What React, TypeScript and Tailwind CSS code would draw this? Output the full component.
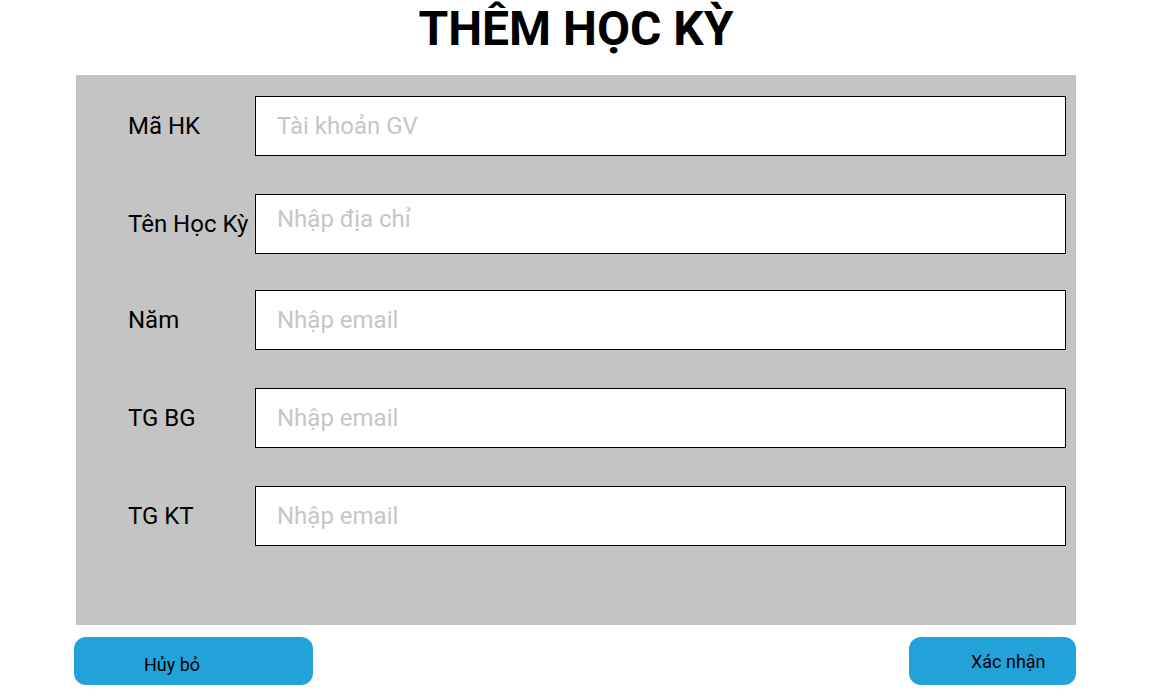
import React from 'react';

const fields = [
  { label: 'Mã HK', placeholder: 'Tài khoản GV', extra: '' },
  { label: 'Tên Học Kỳ', placeholder: 'Nhập địa chỉ', extra: 'pb-[11px]' },
  { label: 'Năm', placeholder: 'Nhập email', extra: '' },
  { label: 'TG BG', placeholder: 'Nhập email', extra: '' },
  { label: 'TG KT', placeholder: 'Nhập email', extra: '' },
];

export default function App() {
  return (
    <div className="w-[1152px] h-[700px] bg-white font-['Roboto',sans-serif] text-black">
      {/* Title */}
      <h1 className="text-center text-[48px] font-bold leading-[normal]">THÊM HỌC KỲ</h1>

      {/* Form panel */}
      <div className="mx-auto mt-[18px] w-[1000px] h-[550px] bg-[#c4c4c4] pt-[21px] pl-[52px] pr-[10px] flex flex-col gap-[38px]">
        {fields.map((f, i) => (
          <div key={i} className={`flex items-center ${i === 2 ? '-mt-[2px]' : ''}`}>
            <label className="w-[127px] shrink-0 text-[24px] leading-[normal] whitespace-nowrap">{f.label}</label>
            <input
              className={`flex-1 h-[60px] bg-white border border-black pl-[21px] text-[24px] outline-none placeholder:text-[#c6c6c6] ${f.extra}`}
              placeholder={f.placeholder}
            />
          </div>
        ))}
      </div>

      {/* Actions */}
      <div className="ml-[74px] mt-[12px] w-[1002px] flex justify-between">
        <button className="w-[239px] h-[48px] rounded-[12px] bg-[#21a2d9] text-left pl-[70px] pt-[17px] flex items-start text-[18px] leading-[normal]">
          Hủy bỏ
        </button>
        <button className="w-[167px] h-[48px] rounded-[12px] bg-[#21a2d9] text-left pl-[62px] pt-[14px] flex items-start text-[18px] leading-[normal]">
          Xác nhận
        </button>
      </div>
    </div>
  );
}
